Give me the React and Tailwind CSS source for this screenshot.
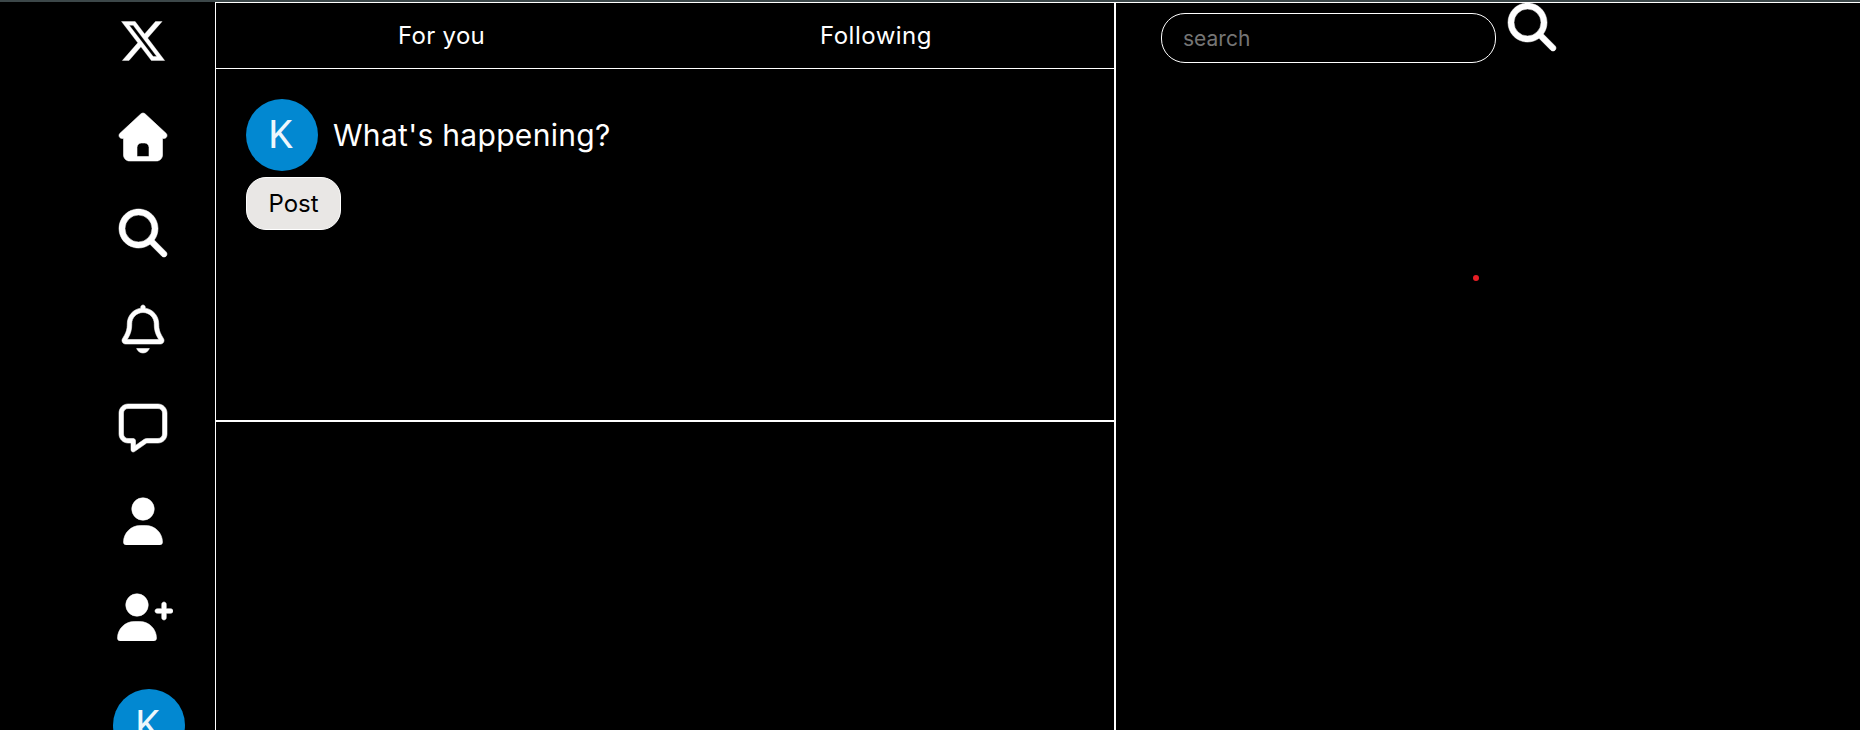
import { FaMagnifyingGlass, FaXTwitter } from "react-icons/fa6";

const outline = { fill: "currentColor", stroke: "currentColor", strokeWidth: 6, strokeLinejoin: "round" };

function HouseIcon() {
  return (
    <svg viewBox="0 0 512 512" {...outline} className="h-12 w-12 overflow-visible">
      <path d="M277.8 8.6c-12.3-11.4-31.3-11.4-43.5 0l-224 208c-9.6 9-12.8 22.9-8 35.1S18.8 272 32 272l16 0 0 176c0 35.3 28.7 64 64 64l288 0c35.3 0 64-28.7 64-64l0-176 16 0c13.2 0 25-8.1 29.8-20.3s1.6-26.2-8-35.1l-224-208zM240 320l32 0c26.5 0 48 21.5 48 48l0 96-128 0 0-96c0-26.5 21.5-48 48-48z" />
    </svg>
  );
}

function BellIcon() {
  return (
    <svg viewBox="0 0 448 512" {...outline} className="h-12 w-[42px] overflow-visible">
      <path d="M224 0c-13.3 0-24 10.7-24 24l0 9.7C118.6 45.3 56 115.4 56 200l0 14.5c0 37.7-10 74.7-29 107.3L5.1 359.2C1.8 365 0 371.5 0 378.2 0 399.1 16.9 416 37.8 416l372.4 0c20.9 0 37.8-16.9 37.8-37.8 0-6.7-1.8-13.3-5.1-19L421 321.7c-19-32.6-29-69.6-29-107.3l0-14.5c0-84.6-62.6-154.7-144-166.3l0-9.7c0-13.3-10.7-24-24-24zM392.4 368l-336.9 0 12.9-22.1C91.7 306 104 260.6 104 214.5l0-14.5c0-66.3 53.7-120 120-120s120 53.7 120 120l0 14.5c0 46.2 12.3 91.5 35.5 131.4L392.4 368zM156.1 464c9.9 28 36.6 48 67.9 48s58-20 67.9-48l-135.8 0z" />
    </svg>
  );
}

function MessageIcon() {
  return (
    <svg viewBox="0 0 512 512" {...outline} className="h-12 w-12 overflow-visible">
      <path d="M203.7 512.9l-37.8 26.7c-7.3 5.2-16.9 5.8-24.9 1.7S128 529 128 520l0-72-32 0c-53 0-96-43-96-96L0 128c0-53 43-96 96-96l320 0c53 0 96 43 96 96l0 224c0 53-43 96-96 96l-120.4 0-91.9 64.9zm64.3-104.1c8.1-5.7 17.8-8.8 27.7-8.8L416 400c26.5 0 48-21.5 48-48l0-224c0-26.5-21.5-48-48-48L96 80c-26.5 0-48 21.5-48 48l0 224c0 26.5 21.5 48 48 48l56 0c10.4 0 19.3 6.6 22.6 15.9.9 2.5 1.4 5.2 1.4 8.1l0 49.7 32.7-23.1 59.3-41.9z" />
    </svg>
  );
}

function UserIcon() {
  return (
    <svg viewBox="0 0 448 512" {...outline} className="h-12 w-[42px]">
      <path d="M224 248a120 120 0 1 0 0-240 120 120 0 1 0 0 240zm-29.7 56C95.8 304 16 383.8 16 482.3 16 498.7 29.3 512 45.7 512l356.6 0c16.4 0 29.7-13.3 29.7-29.7 0-98.5-79.8-178.3-178.3-178.3l-59.4 0z" />
    </svg>
  );
}

function UserPlusIcon() {
  return (
    <svg viewBox="0 0 640 512" {...outline} className="h-12 w-[60px]">
      <path d="M136 128a120 120 0 1 1 240 0 120 120 0 1 1 -240 0zM48 482.3C48 383.8 127.8 304 226.3 304l59.4 0c98.5 0 178.3 79.8 178.3 178.3 0 16.4-13.3 29.7-29.7 29.7L77.7 512C61.3 512 48 498.7 48 482.3z" />
      <path d="M544 96c13.3 0 24 10.7 24 24l0 48 48 0c13.3 0 24 10.7 24 24s-10.7 24-24 24l-48 0 0 48c0 13.3-10.7 24-24 24s-24-10.7-24-24l0-48-48 0c-13.3 0-24-10.7-24-24s10.7-24 24-24l48 0 0-48c0-13.3 10.7-24 24-24z" />
    </svg>
  );
}

function Avatar() {
  return (
    <div className="flex h-[72px] w-[72px] shrink-0 items-center justify-center rounded-full bg-[#0288d1] pr-[3px] font-[Roboto,sans-serif] text-[39px] leading-none text-[#eef7fc]">
      K
    </div>
  );
}

function Sidebar() {
  return (
    <nav className="flex w-[215px] shrink-0 flex-col pt-[15px] pl-[113px]">
      <div className="flex w-[60px] flex-col items-center gap-12">
        <FaXTwitter className="h-12 w-12" strokeWidth="4" stroke="currentColor" />
        <HouseIcon />
        <FaMagnifyingGlass className="h-12 w-12 overflow-visible" strokeWidth="6" stroke="currentColor" />
        <BellIcon />
        <MessageIcon />
        <UserIcon />
        <UserPlusIcon />
      </div>
      <div className="mt-12">
        <Avatar />
      </div>
    </nav>
  );
}

function Feed() {
  return (
    <main className="flex w-[901px] shrink-0 flex-col border-t border-r-2 border-l border-white">
      <header className="flex h-[66px] shrink-0 items-center justify-between border-b border-white pr-[182px] pl-[182px] text-2xl">
        <span className="tracking-[0.3px]">For you</span>
        <span className="tracking-[0.5px]">Following</span>
      </header>
      <section className="flex h-[353px] shrink-0 flex-col items-start gap-1.5 border-b-2 border-white pt-[30px] pl-[30px]">
        <div className="flex items-center gap-[15px]">
          <Avatar />
          <span className="text-[30px] tracking-[0.3px]">What's happening?</span>
        </div>
        <button className="h-[53px] w-[95px] rounded-[20px] border border-white bg-[#e9e7e5] text-2xl text-black">
          Post
        </button>
      </section>
    </main>
  );
}

function SearchPanel() {
  return (
    <aside className="relative flex grow items-start border-t border-white pl-[45px]">
      <input
        placeholder="search"
        className="mt-2.5 h-[50px] w-[335px] rounded-3xl border border-white bg-transparent px-[21px] text-[21px] outline-none placeholder:text-[#757575]"
      />
      <FaMagnifyingGlass className="ml-3 h-12 w-12 overflow-visible" strokeWidth="6" stroke="currentColor" />
      <span className="absolute top-[272px] left-[357px] h-1.5 w-1.5 rounded-full bg-[#e81e25]" />
    </aside>
  );
}

export default function App() {
  return (
    <div className="flex h-[730px] flex-col overflow-hidden bg-black font-[Inter,sans-serif] text-white">
      <div className="h-0.5 shrink-0 bg-[#3c4749]" />
      <div className="flex min-h-0 grow">
        <Sidebar />
        <Feed />
        <SearchPanel />
      </div>
    </div>
  );
}
